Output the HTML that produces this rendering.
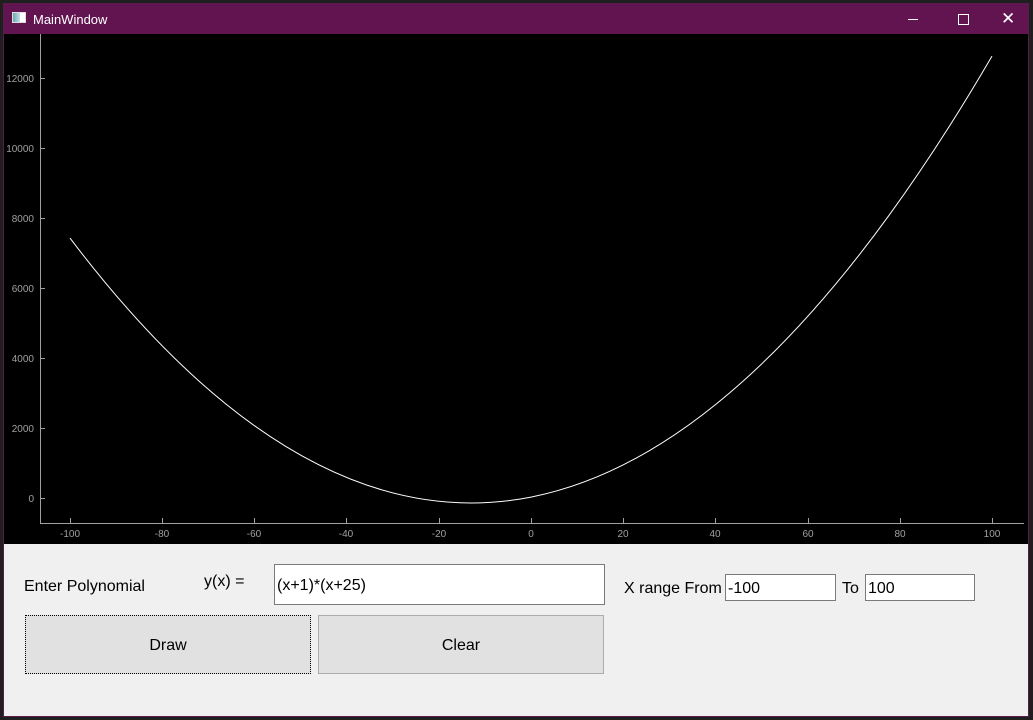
<!DOCTYPE html>
<html><head><style>
body{margin:0;width:1033px;height:720px;background:#1f1f1f;position:relative;overflow:hidden;font-family:"Liberation Sans",sans-serif}
.win{position:absolute;left:3px;top:3px;width:1026px;height:714px;background:#f0f0f0;border:1px solid #5a1a4a;box-sizing:border-box}
.title{position:absolute;left:0;top:0;width:100%;height:30px;background:#621450;color:#fff;font-size:13px}
.t{position:absolute;font-size:16px;color:#000}
.inp{position:absolute;background:#fff;border:1px solid #7a7a7a;box-sizing:border-box;font-size:16px;padding-left:2px}
.btn{position:absolute;background:#e1e1e1;border:1px solid #adadad;box-sizing:border-box;font-size:16px;text-align:center}
</style></head><body>
<div class="win">
<div class="title">
<div style="position:absolute;left:8px;top:8px;width:14px;height:11px;background:linear-gradient(90deg,#6aa 0,#cde 60%,#fff 60%);border:1px solid #ddd;box-sizing:border-box"></div>
<span style="position:absolute;left:29px;top:8px">MainWindow</span>
<div style="position:absolute;left:904px;top:15px;width:10px;height:1px;background:#fff"></div>
<div style="position:absolute;left:954px;top:10px;width:9px;height:9px;border:1px solid #fff"></div>
<span style="position:absolute;left:997px;top:5px;font-size:17px">&#10005;</span>
</div>
</div>
<svg style="position:absolute;left:4px;top:34px" width="1024" height="510" viewBox="4 34 1024 510">
<rect x="4" y="34" width="1024" height="510" fill="#000"/>
<g stroke="#a0a0a0" stroke-width="1">
<line x1="40.5" y1="34" x2="40.5" y2="523"/><line x1="40" y1="523.5" x2="1024" y2="523.5"/>
<line x1="40" y1="498.5" x2="45" y2="498.5"/><line x1="40" y1="428.5" x2="45" y2="428.5"/><line x1="40" y1="358.5" x2="45" y2="358.5"/><line x1="40" y1="288.5" x2="45" y2="288.5"/><line x1="40" y1="218.5" x2="45" y2="218.5"/><line x1="40" y1="148.5" x2="45" y2="148.5"/><line x1="40" y1="78.5" x2="45" y2="78.5"/>
<line x1="70.5" y1="518" x2="70.5" y2="523"/><line x1="162.5" y1="518" x2="162.5" y2="523"/><line x1="254.5" y1="518" x2="254.5" y2="523"/><line x1="346.5" y1="518" x2="346.5" y2="523"/><line x1="439.5" y1="518" x2="439.5" y2="523"/><line x1="531.5" y1="518" x2="531.5" y2="523"/><line x1="623.5" y1="518" x2="623.5" y2="523"/><line x1="715.5" y1="518" x2="715.5" y2="523"/><line x1="808.5" y1="518" x2="808.5" y2="523"/><line x1="900.5" y1="518" x2="900.5" y2="523"/><line x1="992.5" y1="518" x2="992.5" y2="523"/>
</g>
<g fill="#a0a0a0" font-size="10" font-family="Liberation Sans,sans-serif" text-anchor="end">
<text x="34" y="502">0</text><text x="34" y="432">2000</text><text x="34" y="362">4000</text><text x="34" y="292">6000</text><text x="34" y="222">8000</text><text x="34" y="152">10000</text><text x="34" y="82">12000</text>
</g>
<g fill="#a0a0a0" font-size="10" font-family="Liberation Sans,sans-serif" text-anchor="middle">
<text x="70" y="537">-100</text><text x="162" y="537">-80</text><text x="254" y="537">-60</text><text x="346" y="537">-40</text><text x="439" y="537">-20</text><text x="531" y="537">0</text><text x="623" y="537">20</text><text x="715" y="537">40</text><text x="808" y="537">60</text><text x="900" y="537">80</text><text x="992" y="537">100</text>
</g>
<path d="M70 238.1 Q531 847.1 992 56.1" fill="none" stroke="#fff" stroke-width="1"/>
</svg>
<div class="t" style="left:24px;top:578px">Enter Polynomial</div>
<div class="t" style="left:204px;top:573px">y(x) =</div>
<div class="inp" style="left:274px;top:564px;width:331px;height:41px;line-height:41px">(x+1)*(x+25)</div>
<div class="btn" style="left:25px;top:615px;width:286px;height:59px;line-height:59px;border:1px dotted #000">Draw</div>
<div class="btn" style="left:318px;top:615px;width:286px;height:59px;line-height:59px">Clear</div>
<div class="t" style="left:624px;top:580px">X range From</div>
<div class="inp" style="left:725px;top:574px;width:111px;height:27px;line-height:27px">-100</div>
<div class="t" style="left:842px;top:580px">To</div>
<div class="inp" style="left:865px;top:574px;width:110px;height:27px;line-height:27px">100</div>
</body></html>
